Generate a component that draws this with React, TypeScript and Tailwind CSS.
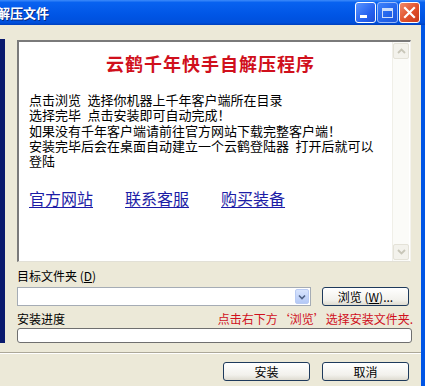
export default function App() {
  return (
    <div className="w-[425px] h-[386px] overflow-hidden bg-[#ECE9D8] font-['Noto_Sans_CJK_SC',sans-serif] flex flex-col">
      {/* title bar */}
      <div className="h-[25px] shrink-0 flex items-center bg-[linear-gradient(to_bottom,#3D8BFA_0%,#0862F0_10%,#0055E5_60%,#0050DC_90%,#0040BE_100%)]">
        <span className="-ml-[3px] text-white text-[13px] font-bold leading-none [text-shadow:1px_1px_0_#0A2A80]">
          解压文件
        </span>
        <div className="ml-auto mr-[5px] flex gap-[1px]">
          <div className="w-[21px] h-[21px] rounded-[3px] border border-white bg-[linear-gradient(135deg,#5A95FF,#2763F0_60%,#1D4FD8)] flex items-end pl-[4px] pb-[4px]">
            <div className="w-[7px] h-[3px] bg-white" />
          </div>
          <div className="w-[21px] h-[21px] rounded-[3px] border border-[#BFD4FF] bg-[linear-gradient(135deg,#4D8BFF,#2A66EC_60%,#2458DB)] flex items-center justify-center opacity-80">
            <div className="w-[11px] h-[10px] border border-white border-t-[3px]" />
          </div>
          <div className="w-[21px] h-[21px] rounded-[3px] border border-white bg-[linear-gradient(135deg,#F08A6A,#E0512B_55%,#C9391A)] flex items-center justify-center">
            <svg width="13" height="13" viewBox="0 0 13 13">
              <path d="M2 2 L11 11 M11 2 L2 11" stroke="#fff" strokeWidth="2.2" strokeLinecap="square" />
            </svg>
          </div>
        </div>
      </div>

      {/* body */}
      <div className="flex-1 min-h-0 flex flex-col border-r-4 border-[#0055E5]">
        <div className="h-[327px] shrink-0 flex">
          <div className="w-[5px] h-[304px] mt-[14px] bg-[#0A1A6E]" />
          <div className="ml-[12px] w-[394px] pt-[15px] flex flex-col">
            {/* text box */}
            <div className="h-[222px] shrink-0 flex bg-white border-l-2 border-t-2 border-l-[#7A7A7A] border-t-[#7A7A7A] border-r border-b border-r-[#F4F3EE] border-b-[#E2E0D6]">
              <div className="flex-1 pl-[10px] pt-[10px]">
                <div className="text-center text-[18px] font-bold leading-[22px] text-[#D0101C] tracking-[1px]">
                  云鹤千年快手自解压程序
                </div>
                <div className="mt-[18px] text-[13px] leading-[15.25px] text-black whitespace-pre">
                  <div>点击浏览{"\u2002"}选择你机器上千年客户端所在目录</div>
                  <div>选择完毕{"\u2002"}点击安装即可自动完成！</div>
                  <div>如果没有千年客户端请前往官方网站下载完整客户端！</div>
                  <div>安装完毕后会在桌面自动建立一个云鹤登陆器{"\u2002"}打开后就可以</div>
                  <div>登陆</div>
                </div>
                <div className="mt-[20px] flex gap-[32px] text-[16px] leading-[20px] text-[#1C1CA6]">
                  <span className="underline underline-offset-2">官方网站</span>
                  <span className="underline underline-offset-2">联系客服</span>
                  <span className="underline underline-offset-2">购买装备</span>
                </div>
              </div>
              <div className="w-[17px] mr-[1px] flex flex-col justify-between py-[1px] bg-[#FBFBF8] border-l border-[#F0EFE8]">
                <div className="h-[16px] rounded-[2px] border border-[#E4E2D8] bg-[#F3F2EC] flex items-center justify-center">
                  <svg width="9" height="6" viewBox="0 0 9 6">
                    <path d="M1 5 L4.5 1.5 L8 5" fill="none" stroke="#C8C6B8" strokeWidth="1.8" />
                  </svg>
                </div>
                <div className="h-[16px] rounded-[2px] border border-[#E4E2D8] bg-[#F3F2EC] flex items-center justify-center">
                  <svg width="9" height="6" viewBox="0 0 9 6">
                    <path d="M1 1 L4.5 4.5 L8 1" fill="none" stroke="#C8C6B8" strokeWidth="1.8" />
                  </svg>
                </div>
              </div>
            </div>

            {/* target folder */}
            <div className="mt-[7px] text-[12px] leading-[14px] text-black">
              目标文件夹 (<span className="underline">D</span>)
            </div>
            <div className="mt-[4px] flex justify-between">
              <div className="w-[294px] h-[19px] bg-white border border-[#A5ACB5] flex justify-end items-stretch p-[1px]">
                <div className="w-[14px] rounded-[2px] border border-[#B9CBF3] bg-[linear-gradient(to_bottom,#D8E4FD,#B4C9F6)] flex items-center justify-center">
                  <svg width="8" height="6" viewBox="0 0 8 6">
                    <path d="M1 1.5 L4 4.5 L7 1.5" fill="none" stroke="#4D6185" strokeWidth="1.6" />
                  </svg>
                </div>
              </div>
              <button className="w-[87px] h-[19px] mr-[2px] rounded-[3px] border border-[#1E3A5C] bg-[linear-gradient(to_bottom,#FFFFFF,#F2F1EC_70%,#DEDBD0)] text-[12px] leading-none text-black flex items-center justify-center">
                浏览 (<span className="underline">W</span>)...
              </button>
            </div>

            {/* progress */}
            <div className="mt-[6px] flex justify-between text-[12px] leading-[14px]">
              <span className="text-black">安装进度</span>
              <span className="text-[#D0101C] -mr-[2px]">点击右下方‘浏览’选择安装文件夹.</span>
            </div>
            <div className="mt-[2px] w-[395px] h-[15px] rounded-[3px] bg-white border border-[#6F6F6F]" />
          </div>
        </div>

        {/* separator */}
        <div className="h-[2px] shrink-0 border-t border-[#ACA899] border-b border-b-white" />

        {/* buttons */}
        <div className="pt-[8px] pr-[12px] flex justify-end gap-[12px]">
          <button className="w-[87px] h-[19px] rounded-[3px] border border-[#1E3A5C] bg-[linear-gradient(to_bottom,#FFFFFF,#F2F1EC_70%,#DEDBD0)] text-[12px] leading-none text-black flex items-center justify-center">
            安装
          </button>
          <button className="w-[87px] h-[19px] rounded-[3px] border border-[#1E3A5C] bg-[linear-gradient(to_bottom,#FFFFFF,#F2F1EC_70%,#DEDBD0)] text-[12px] leading-none text-black flex items-center justify-center">
            取消
          </button>
        </div>
      </div>
    </div>
  );
}
